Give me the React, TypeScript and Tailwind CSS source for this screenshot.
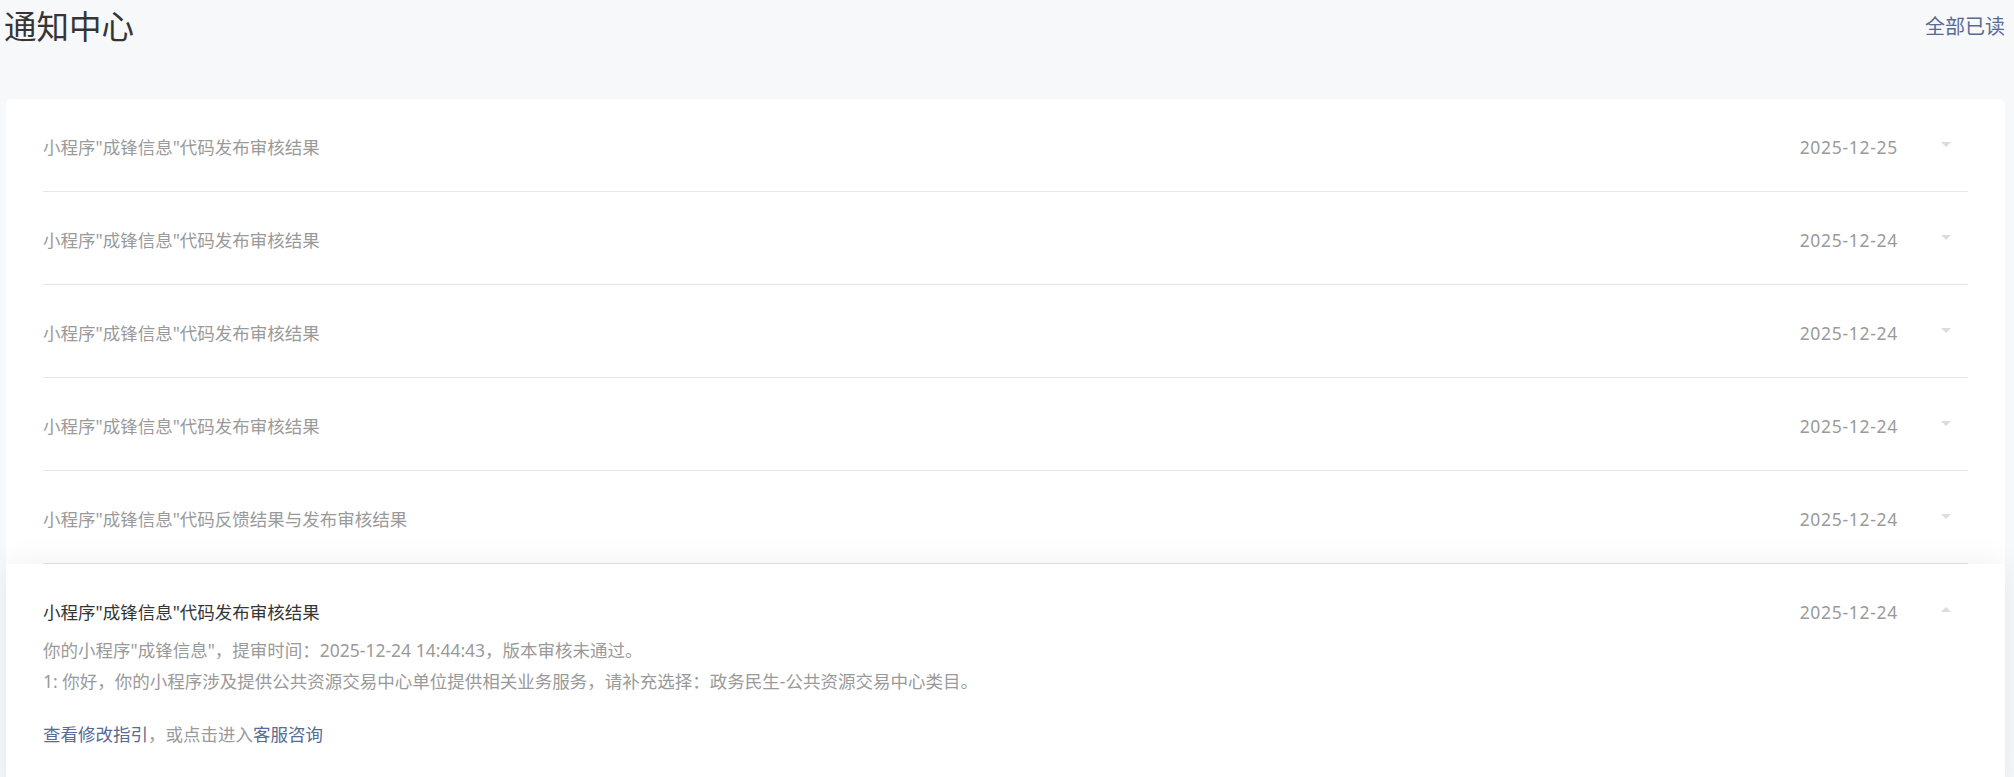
import React from "react";

const font = {
	fontFamily: '"Noto Sans", "Noto Sans CJK SC", sans-serif',
};

interface Notice {
	title: string;
	date: string;
}

const notices: Notice[] = [
	{ title: '小程序"成锋信息"代码发布审核结果', date: "2025-12-25" },
	{ title: '小程序"成锋信息"代码发布审核结果', date: "2025-12-24" },
	{ title: '小程序"成锋信息"代码发布审核结果', date: "2025-12-24" },
	{ title: '小程序"成锋信息"代码发布审核结果', date: "2025-12-24" },
	{ title: '小程序"成锋信息"代码反馈结果与发布审核结果', date: "2025-12-24" },
];

const Caret: React.FC<{ up?: boolean }> = ({ up }) => (
	<svg width="10" height="5" viewBox="0 0 10 5" className="shrink-0">
		{up ? (
			<path d="M0 5 L5 0 L10 5 Z" fill="#dcdcdc" />
		) : (
			<path d="M0 0 L10 0 L5 5 Z" fill="#dcdcdc" />
		)}
	</svg>
);

const App: React.FC = () => {
	return (
		<div
			className="min-h-screen bg-[#f7f8fa] pb-10"
			style={font}
		>
			{/* header */}
			<div className="flex items-center justify-between pl-[4px] pr-[9px] h-[54px]">
				<h1 className="text-[32.5px] leading-[54px] text-[#353535] font-normal">
					通知中心
				</h1>
				<a className="text-[20px] text-[#576b95] cursor-pointer">全部已读</a>
			</div>

			<div className="mt-[45px] ml-[6px] mr-[9px] bg-white rounded-[6px]">
				<div className="px-[37px]">
					{notices.map((n, i) => (
						<div
							key={i}
							className="h-[93px] border-b border-[#e6e6e6] flex items-center justify-between"
						>
							<span className="text-[17.5px] text-[#9a9a9a] pt-[4px]">
								{n.title}
							</span>
							<div className="flex items-center pr-[17px]">
								<span className="text-[17.5px] tracking-[0.7px] text-[#9a9a9a] pt-[4px]">
									{n.date}
								</span>
								<span className="ml-[43px] -mt-[2px]">
									<Caret />
								</span>
							</div>
						</div>
					))}
				</div>

				{/* expanded item */}
				<div className="relative bg-white rounded-b-[6px] shadow-[0_0_32px_rgba(0,0,0,0.07)] px-[37px] pt-[36px] pb-[44px]">
					<div className="flex items-center justify-between">
						<span className="text-[17.5px] leading-[24px] text-[#353535]">
							小程序"成锋信息"代码发布审核结果
						</span>
						<div className="flex items-center pr-[17px]">
							<span className="text-[17.5px] tracking-[0.7px] leading-[24px] text-[#9a9a9a]">
								2025-12-24
							</span>
							<span className="ml-[43px] -mt-[6px]">
								<Caret up />
							</span>
						</div>
					</div>
					<div className="mt-[11px] text-[17.5px] leading-[31px] text-[#9a9a9a]">
						<p>你的小程序"成锋信息"，提审时间：2025-12-24 14:44:43，版本审核未通过。</p>
						<p>
							1: 你好，你的小程序涉及提供公共资源交易中心单位提供相关业务服务，请补充选择：政务民生-公共资源交易中心类目。
						</p>
						<p className="mt-[22px]">
							<a className="text-[#576b95] cursor-pointer">查看修改指引</a>
							，或点击进入
							<a className="text-[#576b95] cursor-pointer">客服咨询</a>
						</p>
					</div>
				</div>
			</div>
		</div>
	);
};

export default App;
